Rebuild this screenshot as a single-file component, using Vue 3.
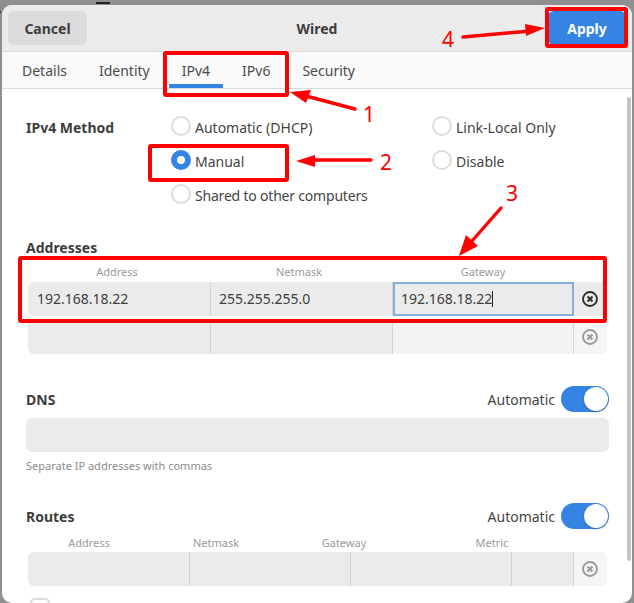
<script setup>
const tabs = ['Details', 'Identity', 'IPv4', 'IPv6', 'Security']
</script>

<template>
  <div class="desk">
    <div class="behind"><span class="behind-s">s</span><span class="behind-bar"></span><span class="behind-net">Network</span></div>
    <div class="window">
      <header class="head">
        <button class="btn cancel">Cancel</button>
        <div class="title">Wired</div>
        <button class="btn apply">Apply</button>
      </header>
      <nav class="tabs">
        <span v-for="t in tabs" :key="t" class="tab" :class="{ on: t === 'IPv4' }">{{ t }}</span>
      </nav>
      <main class="body">
        <div class="scrollbar"></div>
        <div class="method">
          <div class="label">IPv4 Method</div>
          <div class="radios">
            <label class="radio"><i class="dot"></i><span>Automatic (DHCP)</span></label>
            <label class="radio"><i class="dot"></i><span>Link-Local Only</span></label>
            <label class="radio"><i class="dot sel"></i><span>Manual</span></label>
            <label class="radio"><i class="dot"></i><span>Disable</span></label>
            <label class="radio"><i class="dot"></i><span class="tight">Shared to other computers</span></label>
          </div>
        </div>

        <div class="label addr-label">Addresses</div>
        <div class="cols addr-cols"><span>Address</span><span>Netmask</span><span>Gateway</span></div>
        <div class="row addr">
          <div class="cell">192.168.18.22</div>
          <div class="cell">255.255.255.0</div>
          <div class="cell focus">192.168.18.22<b class="caret"></b></div>
          <div class="x dark"><svg width="16" height="16" viewBox="0 0 16 16"><circle cx="8" cy="8" r="7" fill="none" stroke="currentColor" stroke-width="1.9"/><path d="M5.5 5.5l5 5M10.5 5.5l-5 5" stroke="currentColor" stroke-width="2.1"/></svg></div>
        </div>
        <div class="row addr blank">
          <div class="cell"></div>
          <div class="cell"></div>
          <div class="cell pale"></div>
          <div class="x"><svg width="16" height="16" viewBox="0 0 16 16"><circle cx="8" cy="8" r="7" fill="none" stroke="currentColor" stroke-width="1.9"/><path d="M5.5 5.5l5 5M10.5 5.5l-5 5" stroke="currentColor" stroke-width="2.1"/></svg></div>
        </div>

        <div class="sec dns-sec">
          <div class="label">DNS</div>
          <div class="auto">Automatic<i class="switch"></i></div>
        </div>
        <div class="field"></div>
        <div class="hint">Separate IP addresses with commas</div>

        <div class="sec routes-sec">
          <div class="label">Routes</div>
          <div class="auto">Automatic<i class="switch"></i></div>
        </div>
        <div class="cols route-cols"><span>Address</span><span>Netmask</span><span>Gateway</span><span>Metric</span></div>
        <div class="row routes">
          <div class="cell"></div>
          <div class="cell"></div>
          <div class="cell"></div>
          <div class="cell"></div>
          <div class="x"><svg width="16" height="16" viewBox="0 0 16 16"><circle cx="8" cy="8" r="7" fill="none" stroke="currentColor" stroke-width="1.9"/><path d="M5.5 5.5l5 5M10.5 5.5l-5 5" stroke="currentColor" stroke-width="2.1"/></svg></div>
        </div>
        <div class="check"></div>
      </main>
    </div>

    <svg class="marks" width="634" height="603" viewBox="0 0 634 603">
      <g fill="none" stroke="#f00" stroke-width="4">
        <rect x="165" y="53" width="122" height="42" rx="1"/>
        <rect x="150" y="146" width="137" height="34" rx="1"/>
        <rect x="20" y="258" width="585" height="63" rx="1"/>
        <rect x="547" y="9" width="79" height="37" rx="1"/>
      </g>
      <g stroke="#f00" stroke-linecap="round" fill="#f00">
        <path d="M355 109L306 96" fill="none" stroke-width="3.4"/>
        <polygon points="290,92 311,90 306,103" stroke="none"/>
        <path d="M371 160H312" fill="none" stroke-width="3.4"/>
        <polygon points="296,161 315,155 315,167" stroke="none"/>
        <path d="M501 208L472 241" fill="none" stroke-width="3.4"/>
        <polygon points="459,256 466,235 478,246" stroke="none"/>
        <path d="M463 37L530 31" fill="none" stroke-width="3.4"/>
        <polygon points="545,28 525,24 526,36" stroke="none"/>
      </g>
      <g class="num">
        <text x="363" y="122">1</text>
        <text x="380" y="170">2</text>
        <text x="506" y="201">3</text>
        <text x="442" y="47">4</text>
      </g>
    </svg>
  </div>
</template>

<style scoped>
.desk { position: relative; width: 634px; height: 603px; overflow: hidden; background: #8f8f8f; font-family: "Noto Sans", "Open Sans", sans-serif; font-size: 14px; color: #3d3d3d; }
.behind { position: absolute; inset: 0 0 auto 0; height: 20px; }
.behind-s { position: absolute; left: -5px; top: 0; color: #222; font-size: 13px; }
.behind-bar { position: absolute; left: 96px; top: 2px; width: 14px; height: 2px; background: #222; }
.behind-net { position: absolute; left: 437px; top: -15px; color: #222; font-weight: 600; font-size: 14px; }
.window { position: absolute; left: 2px; top: 5px; width: 630px; height: 598px; background: #fff; border-radius: 10px; overflow: hidden; display: flex; flex-direction: column; }
.head { height: 46px; flex: none; background: #ebebeb; border-bottom: 1px solid #d9d9d9; display: flex; align-items: center; justify-content: space-between; padding: 0 6px; position: relative; }
.title { position: absolute; left: 0; right: 0; text-align: center; font-weight: 700; font-size: 14px; }
.btn { border: 0; border-radius: 6px; height: 34px; font: 700 14px "Noto Sans", sans-serif; position: relative; z-index: 1; }
.cancel { width: 79px; background: #dcdcdc; color: #3d3d3d; }
.apply { width: 78px; background: #3584e4; color: #fff; }
.tabs { height: 36px; flex: none; background: #fafafa; border-bottom: 1px solid #d9d9d9; display: flex; padding-left: 8px; }
.tab { position: relative; padding: 0 12px; margin-right: 8px; line-height: 37px; color: #4a4a4a; }
.tab.on::after { content: ""; position: absolute; left: -1px; right: -1px; bottom: 0; height: 4px; background: #3584e4; }
.body { position: relative; flex: 1; min-height: 0; padding: 0 23px 0 24px; }
.scrollbar { position: absolute; right: 1px; top: 8px; width: 4px; height: 464px; background: #c4c4c4; border-radius: 2px; }
.label { font-weight: 700; font-size: 14px; color: #3d3d3d; line-height: 20px; }
.method { display: flex; padding-top: 29px; }
.method .label { width: 145px; }
.radios { display: grid; grid-template-columns: 261px 1fr; grid-auto-rows: 34px; margin-top: -5px; }
.radio { display: flex; align-items: center; height: 26px; gap: 4px; color: #444; }
.radio span { padding-top: 2px; }
.radio .tight { letter-spacing: -0.2px; }
.dot { width: 20px; height: 20px; box-sizing: border-box; border: 2px solid #dcdcdc; border-radius: 50%; background: #fff; }
.dot.sel { border: 6px solid #3584e4; }
.addr-label { margin-top: 23px; }
.cols { display: grid; font-size: 11px; color: #9a9a9a; text-align: center; line-height: 16px; margin-top: 6px; }
.addr-cols { grid-template-columns: 182px 182px 186px; }
.row { display: grid; height: 34px; background: #ebebeb; border-radius: 6px; width: 579px; margin-left: 2px; overflow: hidden; }
.addr { grid-template-columns: 183px 182px 181px 33px; margin-top: 2px; }
.addr.blank { margin-top: 4px; }
.cell { border-right: 1px solid #d4d4d4; padding: 0 8px 0 9px; line-height: 34px; font-size: 14px; box-sizing: border-box; }
.cell + .cell { padding-left: 8px; }
.cell.focus { border: 2px solid #86ade0; line-height: 30px; padding: 0 6px; }
.pale { background: #f3f3f3; }
.caret { display: inline-block; width: 1px; height: 16px; background: #222; vertical-align: -3px; }
.x { display: flex; align-items: center; justify-content: center; padding-right: 1px; color: #9a9a9a; background: #f5f5f5; }
.x.dark { color: #2e2e2e; background: #ebebeb; }
.sec { display: flex; justify-content: space-between; align-items: center; height: 26px; }
.sec .label { margin-top: 2px; }
.dns-sec { margin-top: 32px; }
.auto { display: flex; align-items: center; gap: 6px; color: #444; }
.switch { display: block; position: relative; width: 48px; height: 26px; background: #3584e4; border-radius: 13px; }
.switch::after { content: ""; position: absolute; right: 1px; top: 1px; width: 24px; height: 24px; border-radius: 50%; background: #fff; box-shadow: 0 1px 2px rgba(0,0,0,.3); }
.field { height: 34px; background: #ebebeb; border-radius: 6px; margin-top: 6px; }
.hint { font-size: 11px; color: #8c8c8c; margin-top: 6px; line-height: 16px; }
.routes-sec { margin-top: 29px; }
.route-cols { grid-template-columns: 122px 132px 124px 172px; margin-left: 2px; }
.routes { grid-template-columns: 162px 161px 161px 62px 33px; margin-top: 1px; }
.check { width: 20px; height: 20px; box-sizing: border-box; margin: 12px 0 0 4px; border: 2px solid #dcdcdc; border-radius: 5px; }
.marks { position: absolute; left: 0; top: 0; z-index: 5; }
.num { font: 400 21px "Noto Sans", sans-serif; fill: #f00; }
</style>
